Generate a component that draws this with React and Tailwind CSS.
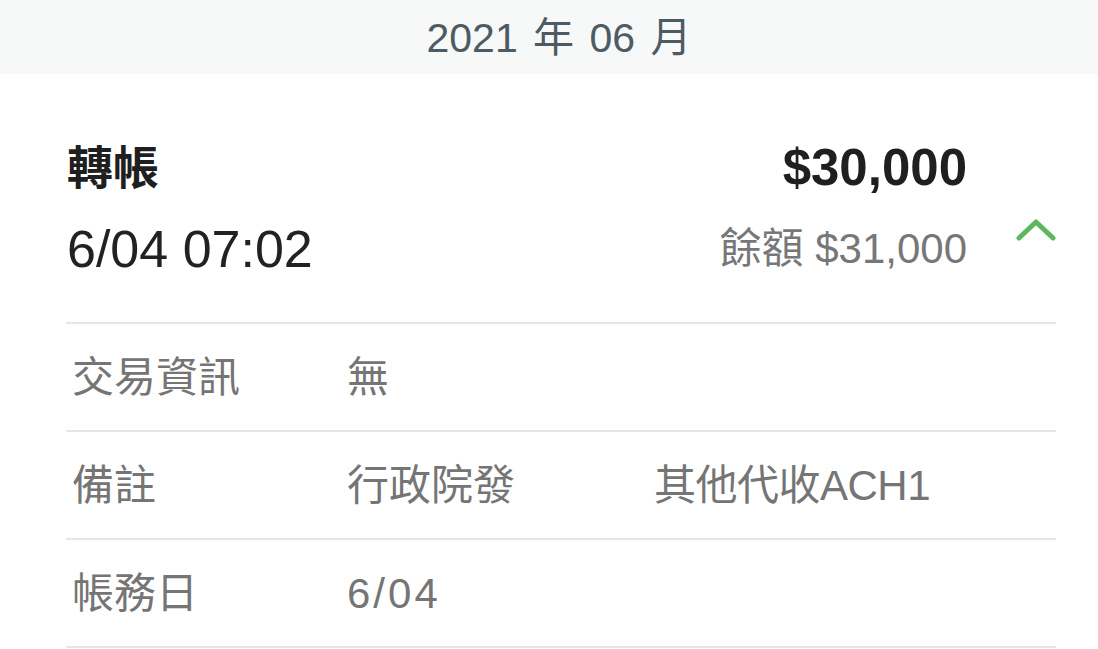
const rows = [
  { label: '交易資訊', value: '無', extra: '' },
  { label: '備註', value: '行政院發', extra: '其他代收ACH1' },
  { label: '帳務日', value: '6/04', extra: '', digits: true },
]

function ChevronUp() {
  return (
    <svg width="40" height="22" viewBox="0 0 40 22" fill="none" aria-hidden>
      <polyline
        points="3,19 20,3 37,19"
        stroke="#5cb85c"
        strokeWidth="5"
        strokeLinecap="round"
        strokeLinejoin="round"
      />
    </svg>
  )
}

export default function App() {
  return (
    <div className="min-h-[649px] w-full bg-white font-['Liberation_Sans','Noto_Sans_CJK_TC',sans-serif]">
      <div className="flex h-[74px] items-center justify-center bg-[#f7f8f8] pt-[3px] pl-[20px] text-[41px] leading-none text-[#4d5b62] [word-spacing:4px]">
        2021 年 06 月
      </div>

      <div className="pl-[66px] pr-[42px]">
        <div className="flex h-[248px]">
          <div className="flex-1 pt-[64px] pl-[1px]">
            <p className="text-[46px] font-bold leading-[60px] text-[#1f1f1f]">轉帳</p>
            <p className="mt-[21px] text-[52px] leading-[60px] text-[#222]">6/04 07:02</p>
          </div>
          <div className="pt-[64px] text-right">
            <p className="text-[51px] font-bold leading-[60px] text-[#1f1f1f]">$30,000</p>
            <p className="mt-[21px] text-[42px] leading-[60px] text-[#777]">餘額 $31,000</p>
          </div>
          <div className="flex w-[89px] justify-end pt-[145px]">
            <ChevronUp />
          </div>
        </div>

        <div className="border-t-2 border-[#e6e6e6]">
          {rows.map((r) => (
            <div
              key={r.label}
              className="grid h-[108px] grid-cols-[281px_307px_1fr] items-center border-b-2 border-[#e6e6e6] text-[42px] text-[#757575]"
            >
              <span className="pl-[6px]">{r.label}</span>
              <span className={r.digits ? 'tracking-[3px]' : ''}>{r.value}</span>
              <span className="tracking-[-0.5px]">{r.extra}</span>
            </div>
          ))}
        </div>
      </div>
    </div>
  )
}
